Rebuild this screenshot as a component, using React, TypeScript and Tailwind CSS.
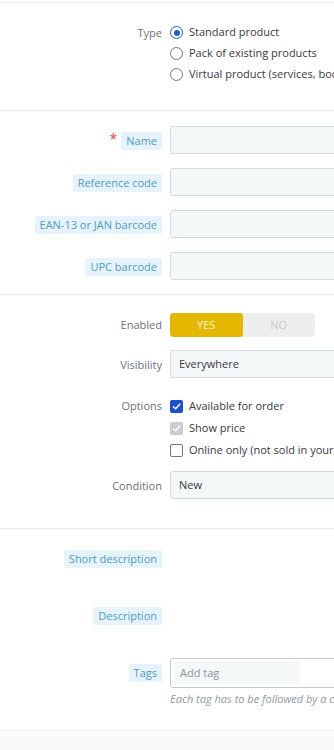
import React from "react";

const Badge: React.FC<{ text: string }> = ({ text }) => (
  <span className="inline-block rounded-[2px] bg-[#e7f3fa] px-[5px] leading-[18px] text-[#4a9dc8]">
    {text}
  </span>
);

const Input: React.FC<{ value?: string }> = ({ value }) => (
  <div className="flex h-[28px] w-[320px] items-center rounded-[3px] border border-[#cfdbe0] bg-[#f5f8f9] px-[8px] text-[#363a41]">
    {value}
  </div>
);

const Row: React.FC<{
  label: React.ReactNode;
  children: React.ReactNode;
  className?: string;
}> = ({ label, children, className }) => (
  <div className={"grid grid-cols-[162px_1fr] gap-x-[8px] " + (className ?? "")}>
    <div className="flex items-start justify-end">{label}</div>
    <div>{children}</div>
  </div>
);

const Radio: React.FC<{ checked?: boolean }> = ({ checked }) =>
  checked ? (
    <span className="flex h-[13px] w-[13px] items-center justify-center rounded-full border-[1.5px] border-[#1d5fd8]">
      <span className="h-[6px] w-[6px] rounded-full bg-[#1d5fd8]" />
    </span>
  ) : (
    <span className="h-[13px] w-[13px] rounded-full border-[1.5px] border-[#6d7a85]" />
  );

const Check: React.FC<{ state: "on" | "disabled" | "off" }> = ({ state }) => {
  if (state === "off")
    return <span className="h-[13px] w-[13px] rounded-[2px] border-[1.5px] border-[#6d7a85]" />;
  return (
    <span
      className={
        "flex h-[13px] w-[13px] items-center justify-center rounded-[2px] " +
        (state === "on" ? "bg-[#1a4fd0]" : "bg-[#c9cdd2]")
      }
    >
      <svg width="9" height="9" viewBox="0 0 10 10" fill="none">
        <path d="M1.5 5.2 4 7.6 8.6 2.4" stroke="white" strokeWidth="1.6" strokeLinecap="round" strokeLinejoin="round" />
      </svg>
    </span>
  );
};

const Plain: React.FC<{ text: string }> = ({ text }) => (
  <span className="leading-[18px] text-[#6c7177]">{text}</span>
);

export default function App() {
  return (
    <div className="h-[750px] w-[334px] overflow-hidden bg-white font-['Open_Sans',sans-serif] text-[11px]">
      <div className="w-[520px]">
        <div className="h-[2px]" />
        {/* type */}
        <section className="border-t border-[#ebedef] pb-[25px] pt-[19px]">
          <Row label={<span className="leading-[21px] text-[#6c7177]">Type</span>}>
            <div className="flex flex-col">
              {[
                ["Standard product", true],
                ["Pack of existing products", false],
                ["Virtual product (services, booking or downloadable products)", false],
              ].map(([t, c]) => (
                <label key={t as string} className="flex h-[21px] items-center gap-[6px] whitespace-nowrap text-[#363a41]">
                  <Radio checked={c as boolean} />
                  {t as string}
                </label>
              ))}
            </div>
          </Row>
        </section>

        {/* names */}
        <section className="flex flex-col gap-[14px] border-t border-[#ebedef] pb-[14px] pt-[15px]">
          <Row
            label={
              <span className="mt-[6px] flex items-start gap-[4px]">
                <span className="text-[14px] leading-[14px] text-[#f04040]">*</span>
                <Badge text="Name" />
              </span>
            }
          >
            <Input />
          </Row>
          <Row label={<span className="mt-[6px]"><Badge text="Reference code" /></span>}>
            <Input />
          </Row>
          <Row label={<span className="mt-[6px]"><Badge text="EAN-13 or JAN barcode" /></span>}>
            <Input />
          </Row>
          <Row label={<span className="mt-[6px]"><Badge text="UPC barcode" /></span>}>
            <Input />
          </Row>
        </section>

        {/* status */}
        <section className="border-t border-[#ebedef] pb-[29px] pt-[18px]">
          <Row label={<span className="mt-[3px]"><Plain text="Enabled" /></span>}>
            <div className="flex h-[24px] w-[145px] overflow-hidden rounded-[3px] bg-[#eeeeee] text-[11px]">
              <div className="flex w-1/2 items-center justify-center rounded-[3px] bg-[#e4b700] text-[#fff6d6]">YES</div>
              <div className="flex w-1/2 items-center justify-center text-[#c9c9c9]">NO</div>
            </div>
          </Row>
          <Row className="mt-[13px]" label={<span className="mt-[6px]"><Plain text="Visibility" /></span>}>
            <Input value="Everywhere" />
          </Row>
          <Row className="mt-[17px]" label={<span className="leading-[22px] text-[#6c7177]">Options</span>}>
            <div className="flex flex-col">
              {(
                [
                  ["Available for order", "on"],
                  ["Show price", "disabled"],
                  ["Online only (not sold in your retail store)", "off"],
                ] as const
              ).map(([t, s]) => (
                <label key={t} className="flex h-[22px] items-center gap-[6px] whitespace-nowrap text-[#363a41]">
                  <Check state={s} />
                  {t}
                </label>
              ))}
            </div>
          </Row>
          <Row className="mt-[10px]" label={<span className="mt-[6px]"><Plain text="Condition" /></span>}>
            <Input value="New" />
          </Row>
        </section>

        {/* descriptions */}
        <section className="border-t border-[#ebedef] pb-[24px] pt-[21px]">
          <Row label={<Badge text="Short description" />}>
            <div className="h-[18px]" />
          </Row>
          <Row className="mt-[39px]" label={<Badge text="Description" />}>
            <div className="h-[18px]" />
          </Row>
          <Row className="mt-[33px]" label={<span className="mt-[6px]"><Badge text="Tags" /></span>}>
            <div className="flex h-[30px] w-[320px] items-center rounded-[3px] border border-[#c3ccd0] bg-white px-[3px]">
              <div className="flex h-[24px] w-[126px] items-center bg-[#f5f8f9] px-[6px] text-[#8a959c]">Add tag</div>
            </div>
            <p className="mt-[3px] whitespace-nowrap text-[11px] italic leading-[15px] text-[#8e9aa1]">
              Each tag has to be followed by a comma. The following characters are forbidden: !&lt;;&gt;;?=+#"°{}_$%.
            </p>
          </Row>
        </section>
        <div className="h-[30px] border-t border-[#ebedef] bg-[#f8fafc]" />
      </div>
    </div>
  );
}
